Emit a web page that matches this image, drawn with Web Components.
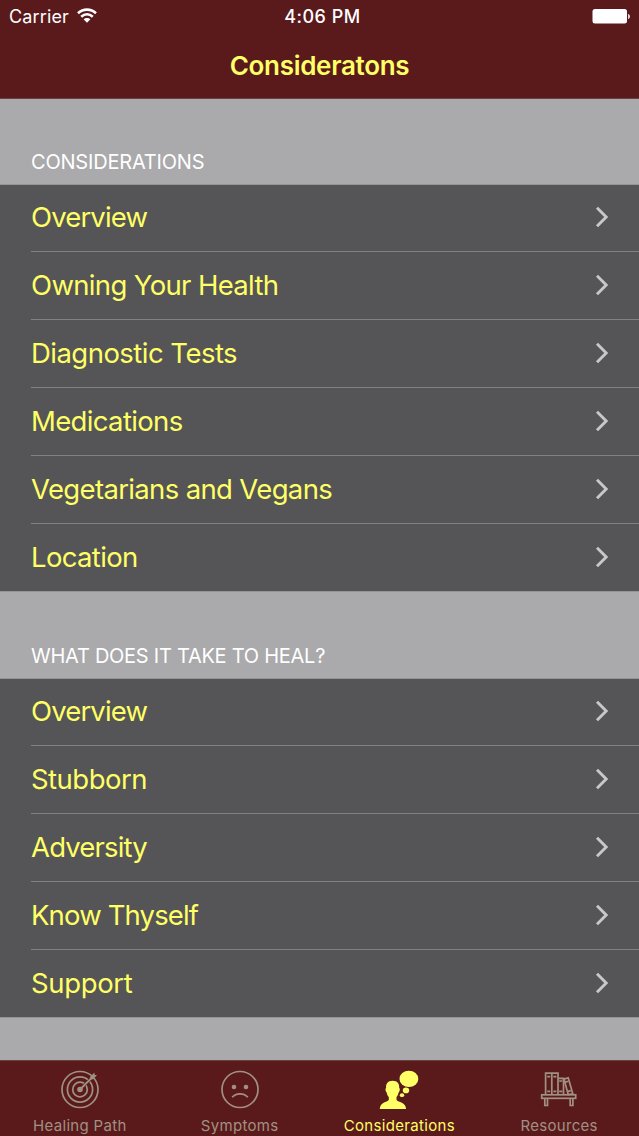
<!DOCTYPE html>
<html lang="en">
<head>
<meta charset="utf-8">
<title>Considerations</title>
<style>
  body {
    margin: 0;
    background-color: #aaa9ab;
    font-family: Inter, "Liberation Sans", sans-serif;
  }
</style>
</head>
<body>
<health-app></health-app>

<script>
class StatusBar extends HTMLElement {
  constructor() {
    super();
    this.attachShadow({ mode: 'open' }).innerHTML = `
      <style>
        :host {
          display: grid;
          grid-template-columns: 1fr auto 1fr;
          align-items: center;
          height: 32px;
          padding: 0 8px 0 9px;
          color: #fff;
          font-size: 18px;
          line-height: 32px;
        }
        .carrier { display: flex; align-items: center; gap: 8px; letter-spacing: .15px; }
        .carrier, .time { padding-top: 1px; line-height: 31px; }
        .carrier svg { margin-top: -2px; }
        .time { font-weight: 500; letter-spacing: .5px; padding-left: 5px; }
        .battery { justify-self: end; }
        svg { display: block; }
      </style>
      <div class="carrier">
        <slot name="carrier"></slot>
        <svg width="20" height="15" viewBox="0 0 20 15" fill="none" stroke="#fff" stroke-width="2.6">
          <path d="M1 5.2C6.2.4 13.8.4 19 5.2"/>
          <path d="M4.2 8.7c3.5-3.1 8.1-3.1 11.6 0"/>
          <path d="M6.6 11.3c1.9-1.9 4.9-1.9 6.8 0L10 14.7z" fill="#fff" stroke="none"/>
        </svg>
      </div>
      <div class="time"><slot name="time"></slot></div>
      <svg class="battery" width="39" height="15" viewBox="0 0 39 15" fill="#fff">
        <rect x="0.5" y="0" width="34.5" height="14.5" rx="2.5"/>
        <path d="M36.2 5c2.2.6 2.2 4.4 0 5z"/>
      </svg>
    `;
  }
}
customElements.define('status-bar', StatusBar);

class NavBar extends HTMLElement {
  constructor() {
    super();
    this.attachShadow({ mode: 'open' }).innerHTML = `
      <style>
        :host {
          display: block;
          height: 66px;
          box-sizing: border-box;
          color: #ffff66;
          font-size: 26px;
          font-weight: 600;
          line-height: 67px;
          text-align: center;
          letter-spacing: -.3px;
        }
      </style>
      <slot></slot>
    `;
  }
}
customElements.define('nav-bar', NavBar);

class ListRow extends HTMLElement {
  constructor() {
    super();
    this.attachShadow({ mode: 'open' }).innerHTML = `
      <style>
        :host {
          display: block;
          height: 68px;
          padding-left: 31px;
          color: #ffff66;
          font-size: 27.5px;
          letter-spacing: var(--track, -.65px);
        }
        :host(:first-of-type), :host(:last-child) { height: 67px; }
        .row {
          display: flex;
          align-items: center;
          justify-content: space-between;
          height: 100%;
          box-sizing: border-box;
          padding: 0 30px 1px 0;
          border-bottom: 1px solid #818083;
        }
        :host(:first-of-type) .row { padding-bottom: 2px; }
        :host(:last-child) .row { padding-bottom: 0; border-bottom-color: transparent; }
      </style>
      <div class="row">
        <slot></slot>
        <svg width="14" height="22" viewBox="0 0 14 22" fill="none" stroke="#c7c7cc" stroke-width="2.9">
          <path d="M2 1.8 11.2 11 2 20.2"/>
        </svg>
      </div>
    `;
  }
}
customElements.define('list-row', ListRow);

class ListSection extends HTMLElement {
  constructor() {
    super();
    this.attachShadow({ mode: 'open' }).innerHTML = `
      <style>
        :host { display: block; }
        header {
          display: flex;
          align-items: flex-end;
          height: var(--header-height, 87px);
          box-sizing: border-box;
          padding: 0 31px 10px;
          border-bottom: 1px solid #959496;
          color: #fff;
          font-size: 20px;
          line-height: 24px;
          letter-spacing: var(--track, -.2px);
        }
        .rows { background-color: #555456; background-clip: padding-box; border-bottom: 1px solid #959496; }
      </style>
      <header><slot name="title"></slot></header>
      <div class="rows"><slot></slot></div>
    `;
  }
}
customElements.define('list-section', ListSection);

const icons = {
  target: `
    <g fill="none" stroke="currentColor" stroke-width="1.7">
      <circle cx="20" cy="19.5" r="18"/>
      <circle cx="20" cy="19.5" r="12.6"/>
      <circle cx="20" cy="19.5" r="7.3"/>
    </g>
    <path d="M23 16.5 33 6.5" stroke="#5a1a1c" stroke-width="3"/>
    <circle cx="20" cy="19.5" r="2.8" fill="currentColor"/>
    <path d="M20 19.5 33 6.5" stroke="currentColor" stroke-width="1.8"/>
    <path d="M29.9 9.6 30.3 6.4 34.5 2.4 34.6 5 37 5.1 33.2 9.3z" fill="currentColor"/>`,
  sad: `
    <g fill="none" stroke="currentColor" stroke-width="1.7">
      <circle cx="20" cy="19.5" r="18"/>
      <path d="M12.2 27.3C16 22.6 24 22.6 27.8 27.3" stroke-width="1.8"/>
    </g>
    <circle cx="14" cy="17" r="2.3" fill="currentColor"/>
    <circle cx="26" cy="17" r="2.3" fill="currentColor"/>`,
  thought: `
    <g fill="currentColor">
      <ellipse cx="29.9" cy="8.9" rx="9.4" ry="8.2"/>
      <ellipse cx="27" cy="20.4" rx="3.2" ry="2.8"/>
      <ellipse cx="23" cy="25.2" rx="2.2" ry="1.9"/>
      <path d="M13.6 10.8c4.6 0 7 2.8 6.6 7 1.1.9.6 4-.6 4.6-.4 2.2-1.3 3.6-2.1 4.6v3c1.8 2.3 9.4 2.3 9.6 9H.8c.2-6.7 7.2-6.7 9-9v-3c-.9-1-1.8-2.4-2.1-4.6-1.2-.6-1.7-3.7-.6-4.6-.4-4.2 1.9-7 6.5-7z"/>
    </g>`,
  books: `
    <g fill="none" stroke="currentColor" stroke-width="1.7">
      <path d="M6.6 24.5V3.1h6.2v21.4M12.8 24.5V3.1H19v21.4M19 8.4h5.5v16.1M8.2 6.6h3M8.2 21.4h3M14.4 6.6h3M14.4 21.4h3M20.2 11h3M20.2 21.4h3"/>
      <path d="M25 9.1 29.2 7.8 33.8 23.8 29.2 24.5zM26.5 12.1 29.1 11.3M29.2 21.4 31.8 20.6"/>
      <rect x="2.7" y="24.8" width="34" height="3.5"/>
      <path d="M5.8 28.4v7.1h2.7v-7.1M31.2 28.4v7.1h2.7v-7.1"/>
    </g>`,
};

class TabItem extends HTMLElement {
  connectedCallback() {
    if (this.shadowRoot) return;
    this.attachShadow({ mode: 'open' }).innerHTML = `
      <style>
        :host {
          display: flex;
          flex-direction: column;
          align-items: center;
          padding-top: 9px;
          color: #a19182;
          font-size: 15px;
          line-height: 18px;
          letter-spacing: var(--track, .32px);
          white-space: nowrap;
        }
        :host([active]) { color: #ffff66; }
        svg { display: block; margin-bottom: 7px; }
      </style>
      <svg width="40" height="40" viewBox="0 0 40 40">${icons[this.getAttribute('icon')]}</svg>
      <slot></slot>
    `;
  }
}
customElements.define('tab-item', TabItem);

class TabBar extends HTMLElement {
  constructor() {
    super();
    this.attachShadow({ mode: 'open' }).innerHTML = `
      <style>
        :host {
          display: grid;
          grid-template-columns: repeat(4, 1fr);
          height: 76px;
          background-color: #5a1a1c;
          box-sizing: border-box;
          border-top: 1px solid #6a4143;
        }
      </style>
      <slot></slot>
    `;
  }
}
customElements.define('tab-bar', TabBar);

class HealthApp extends HTMLElement {
  constructor() {
    super();
    this.attachShadow({ mode: 'open' }).innerHTML = `
      <style>
        :host {
          display: flex;
          flex-direction: column;
          height: 1136px;
          overflow: hidden;
        }
        .top {
          height: 99px;
          box-sizing: border-box;
          background-color: #5a1a1c;
          border-bottom: 1px solid #6a4143;
        }
        main { flex: 1; }
      </style>
      <div class="top">
        <status-bar>
          <span slot="carrier">Carrier</span>
          <span slot="time">4:06 PM</span>
        </status-bar>
        <nav-bar>Consideratons</nav-bar>
      </div>
      <main>
        <list-section style="--header-height: 86px">
          <span slot="title">CONSIDERATIONS</span>
          <list-row style="--track: -.85px">Overview</list-row>
          <list-row>Owning Your Health</list-row>
          <list-row style="--track: -.53px">Diagnostic Tests</list-row>
          <list-row>Medications</list-row>
          <list-row>Vegetarians and Vegans</list-row>
          <list-row>Location</list-row>
        </list-section>
        <list-section style="--header-height: 87px">
          <span slot="title" style="letter-spacing: -.26px">WHAT DOES IT TAKE TO HEAL?</span>
          <list-row style="--track: -.85px">Overview</list-row>
          <list-row style="--track: -.52px">Stubborn</list-row>
          <list-row style="--track: -.83px">Adversity</list-row>
          <list-row style="--track: -.86px">Know Thyself</list-row>
          <list-row style="--track: -.35px">Support</list-row>
        </list-section>
      </main>
      <tab-bar>
        <tab-item icon="target">Healing Path</tab-item>
        <tab-item icon="sad">Symptoms</tab-item>
        <tab-item icon="thought" active>Considerations</tab-item>
        <tab-item icon="books">Resources</tab-item>
      </tab-bar>
    `;
  }
}
customElements.define('health-app', HealthApp);
</script>
</body>
</html>
